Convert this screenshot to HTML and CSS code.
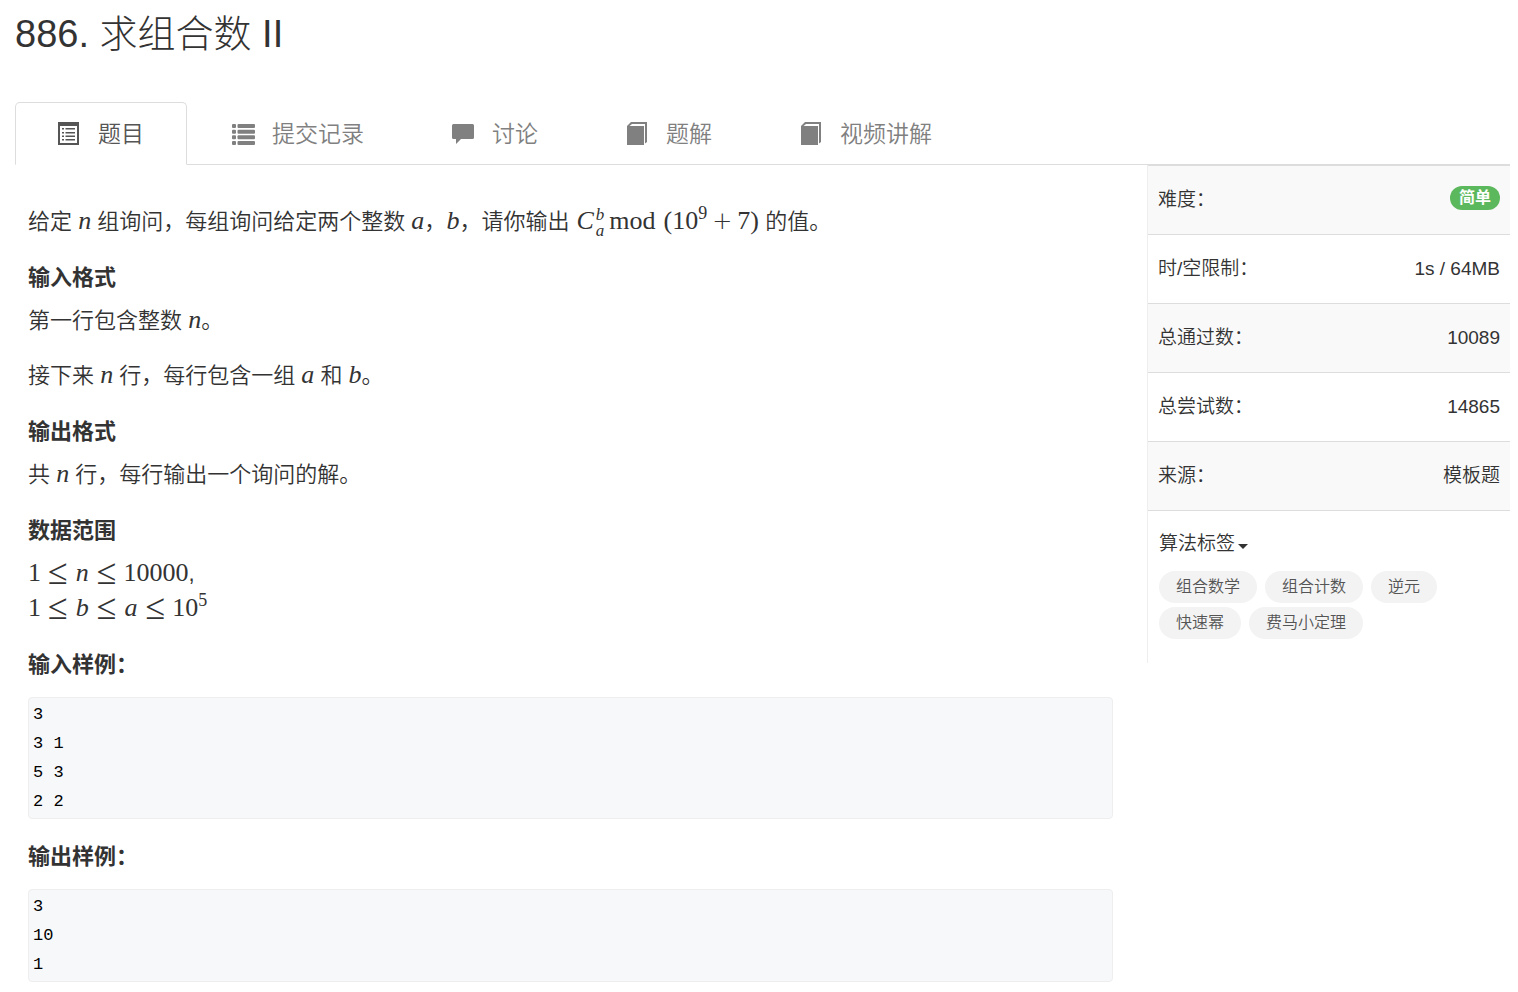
FILE: index.html
```html
<!DOCTYPE html>
<html lang="zh-CN">

<head>
	<meta charset="UTF-8">
	<meta name="viewport" content="width=device-width, initial-scale=1.0">
	<title>886. 求组合数 II</title>
	<link rel="stylesheet" href="styles.css">
</head>

<body>
	<div class="container">
		<h1 class="problem-title">886. 求组合数 II</h1>

		<nav class="tabs">
			<a class="tab active" href="#problem">
				<svg class="icon" viewBox="0 0 23 23">
					<path fill-rule="evenodd" d="M0 0h21v23H0zM2 4v17h17V4z" />
					<path d="M4 6h2v1.500H4zM4 10h2v1.500H4zM4 13.500h2V15H4zM4 17h2v1.500H4zM7.500 6H17v1.500H7.500zM7.500 10H17v1.500H7.500zM7.500 13.500H17V15H7.500zM7.500 17H17v1.500H7.500z" />
				</svg>
				<span>题目</span>
			</a>
			<a class="tab" href="#submission">
				<svg class="icon" viewBox="0 0 23 23">
					<rect x="0" y="2" width="4" height="4" rx="1" /><rect x="5.500" y="2" width="17.500" height="4" rx="1" />
					<rect x="0" y="7.700" width="4" height="4" rx="1" /><rect x="5.500" y="7.700" width="17.500" height="4" rx="1" />
					<rect x="0" y="13.300" width="4" height="4" rx="1" /><rect x="5.500" y="13.300" width="17.500" height="4" rx="1" />
					<rect x="0" y="19" width="4" height="4" rx="1" /><rect x="5.500" y="19" width="17.500" height="4" rx="1" />
				</svg>
				<span>提交记录</span>
			</a>
			<a class="tab" href="#discussion">
				<svg class="icon" viewBox="0 0 23 23">
					<path d="M1.500 2h19a1.500 1.500 0 0 1 1.500 1.500v12a1.500 1.500 0 0 1-1.500 1.500H9l-5 5v-5H1.500A1.500 1.500 0 0 1 0 15.500v-12A1.500 1.500 0 0 1 1.500 2z" />
				</svg>
				<span>讨论</span>
			</a>
			<a class="tab" href="#solution">
				<svg class="icon" viewBox="0 0 23 23">
					<path d="M1 4L5 0h16v20l-2 1.500V2H6L3.500 4H18v19H1z" />
				</svg>
				<span>题解</span>
			</a>
			<a class="tab" href="#video">
				<svg class="icon" viewBox="0 0 23 23">
					<path d="M1 4L5 0h16v20l-2 1.500V2H6L3.500 4H18v19H1z" />
				</svg>
				<span>视频讲解</span>
			</a>
		</nav>

		<div class="content">
			<main class="problem" id="problem">
				<p>给定 <i class="math">n</i> 组询问，每组询问给定两个整数 <i class="math">a</i>，<i class="math">b</i>，请你输出 <span class="math"><i>C</i><span class="scripts"><i>b</i><i>a</i></span><span class="op">mod</span>(10<sup>9</sup><span class="plus">+</span>7)</span> 的值。</p>

				<h4>输入格式</h4>
				<p>第一行包含整数 <i class="math">n</i>。</p>
				<p>接下来 <i class="math">n</i> 行，每行包含一组 <i class="math">a</i> 和 <i class="math">b</i>。</p>

				<h4>输出格式</h4>
				<p>共 <i class="math">n</i> 行，每行输出一个询问的解。</p>

				<h4>数据范围</h4>
				<p>
					<span class="math">1<span class="rel">≤</span><i>n</i><span class="rel">≤</span>10000</span>,<br>
					<span class="math">1<span class="rel">≤</span><i>b</i><span class="rel">≤</span><i>a</i><span class="rel">≤</span>10<sup>5</sup></span>
				</p>

				<h4>输入样例：</h4>
				<pre><code>3
3 1
5 3
2 2</code></pre>

				<h4>输出样例：</h4>
				<pre><code>3
10
1</code></pre>
			</main>

			<aside class="sidebar">
				<table class="info">
					<tr>
						<th scope="row">难度：</th>
						<td><span class="label">简单</span></td>
					</tr>
					<tr>
						<th scope="row">时/空限制：</th>
						<td>1s / 64MB</td>
					</tr>
					<tr>
						<th scope="row">总通过数：</th>
						<td>10089</td>
					</tr>
					<tr>
						<th scope="row">总尝试数：</th>
						<td>14865</td>
					</tr>
					<tr>
						<th scope="row">来源：</th>
						<td>模板题</td>
					</tr>
				</table>
				<div class="algorithm">
					<button class="toggle" type="button">算法标签<span class="caret"></span></button>
					<div class="tags">
						<a class="tag" href="#">组合数学</a>
						<a class="tag" href="#">组合计数</a>
						<a class="tag" href="#">逆元</a>
						<a class="tag" href="#">快速幂</a>
						<a class="tag" href="#">费马小定理</a>
					</div>
				</div>
			</aside>
		</div>
	</div>
</body>

</html>
```
FILE: styles.css
```css
* {
	box-sizing: border-box;
}

body {
	margin: 0;
	font-family: "Liberation Sans", "Noto Sans CJK SC", sans-serif;
	font-size: 22px;
	font-weight: 350;
	color: #333;
	background: #fff;
}

.container {
	padding: 10px 8px 10px 15px;
}

.problem-title {
	margin: 0 0 44px;
	font-size: 38px;
	font-weight: 300;
	line-height: 48px;
}

/* Tabs */
.tabs {
	display: flex;
	gap: 2px;
	border-bottom: 1px solid #ddd;
}

.tab {
	display: flex;
	align-items: center;
	gap: 17px;
	height: 63px;
	margin-bottom: -1px;
	padding: 0 42px;
	border: 1px solid transparent;
	border-radius: 5px 5px 0 0;
	font-size: 23px;
	line-height: 28px;
	color: #808080;
	text-decoration: none;
}

.tab.active {
	border-color: #ddd;
	border-bottom-color: #fff;
	background: #fff;
	color: #555;
}

.icon {
	width: 23px;
	height: 23px;
	fill: currentColor;
}

/* Problem text */
.content {
	display: grid;
	grid-template-columns: minmax(0, 1fr) 363px;
	align-items: start;
}

.problem {
	padding: 39px 34px 0 13px;
}

.problem p {
	margin: 0 0 20px;
	line-height: 35px;
}

.problem h4 {
	margin: 26px 0 13px;
	font-size: 22px;
	font-weight: 700;
	line-height: 24px;
}

.problem p + h4 {
	margin-top: 27px;
}

.problem pre {
	margin: 20px 0 0;
	padding: 2px 4px;
	border: 1px solid #eee;
	border-radius: 4px;
	background: #f7f8fa;
	font-family: "Liberation Mono", monospace;
	font-size: 17px;
	line-height: 29px;
	color: #000;
}

.problem code {
	font: inherit;
}

/* Formulas */
.math {
	font-family: "Liberation Serif", "Noto Sans CJK SC", serif;
	font-size: 26px;
	line-height: 1;
}

.math i {
	padding: 0 1px;
}

.math sup {
	font-size: 18px;
	line-height: 0;
}

.scripts {
	display: inline-flex;
	flex-direction: column;
	margin-right: 4px;
	font-size: 17px;
	line-height: 16px;
	vertical-align: middle;
}

.op {
	margin-right: 8px;
}

.plus {
	margin: 0 5px;
	font-family: "DejaVu Sans", sans-serif;
	font-size: 24px;
	font-weight: 200;
}

.rel {
	margin: 0 7px;
	font-size: 36px;
	line-height: 0;
	vertical-align: -3px;
}

/* Sidebar */
.sidebar {
	border-left: 1px solid #eee;
	font-size: 19px;
}

.info {
	width: 100%;
	border-collapse: collapse;
}

.info tr {
	height: 69px;
	border-top: 1px solid #ddd;
	border-bottom: 1px solid #ddd;
}

.info tr:nth-child(odd) {
	background: #f9f9f9;
}

.info th,
.info td {
	padding: 0 10px;
	font-weight: 350;
	line-height: 28px;
	text-align: left;
}

.info td {
	text-align: right;
}

.label {
	display: inline-block;
	padding: 0 9px;
	border-radius: 12px;
	background: #5cb85c;
	font-size: 16px;
	font-weight: 700;
	line-height: 24px;
	vertical-align: text-bottom;
	color: #fff;
}

.algorithm {
	padding: 19px 11px 24px;
}

.toggle {
	display: flex;
	align-items: center;
	padding: 0;
	border: 0;
	background: none;
	font: inherit;
	line-height: 28px;
	color: inherit;
}

.caret {
	margin: 4px 0 0 3px;
	border: 5px solid transparent;
	border-top-color: #333;
	border-bottom: 0;
}

.tags {
	display: flex;
	flex-wrap: wrap;
	gap: 4px 8px;
	max-width: 300px;
	margin-top: 13px;
}

.tag {
	padding: 0 17px;
	border-radius: 16px;
	background: #f3f3f3;
	font-size: 16px;
	line-height: 32px;
	color: #555;
	text-decoration: none;
}
```
